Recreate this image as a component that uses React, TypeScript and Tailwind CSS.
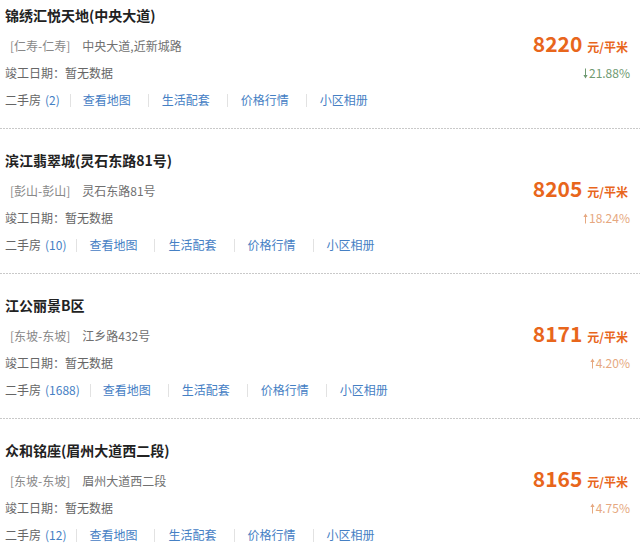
import React from "react";

type Item = {
  name: string;
  district: string;
  address: string;
  count: number;
  price: number;
  pct: string;
  up: boolean;
};

const items: Item[] = [
  { name: "锦绣汇悦天地(中央大道)", district: "仁寿-仁寿", address: "中央大道,近新城路", count: 2, price: 8220, pct: "21.88%", up: false },
  { name: "滨江翡翠城(灵石东路81号)", district: "彭山-彭山", address: "灵石东路81号", count: 10, price: 8205, pct: "18.24%", up: true },
  { name: "江公丽景B区", district: "东坡-东坡", address: "江乡路432号", count: 1688, price: 8171, pct: "4.20%", up: true },
  { name: "众和铭座(眉州大道西二段)", district: "东坡-东坡", address: "眉州大道西二段", count: 12, price: 8165, pct: "4.75%", up: true },
];

const links = ["查看地图", "生活配套", "价格行情", "小区相册"];

function Arrow({ up, color }: { up: boolean; color: string }) {
  return (
    <svg width="5" height="11" viewBox="0 0 5 11" className="mr-[1px] inline-block" style={{ transform: up ? "none" : "rotate(180deg)" }}>
      <path d="M2.5 0.5 L4.6 4 L3 4 L3 10.5 L2 10.5 L2 4 L0.4 4 Z" fill={color} />
    </svg>
  );
}

function Sep() {
  return <span className="inline-block h-[13px] w-px bg-[#e2e2e2]" />;
}

function Row({ item }: { item: Item }) {
  const pctColor = item.up ? "#e6a880" : "#6f9a72";
  return (
    <div className="pt-[21px]">
      <div className="h-[20px] pl-[5px] text-[14px] leading-[20px] font-bold text-[#222]">{item.name}</div>
      <div className="mt-[11px] flex h-[20px] items-center justify-between">
        <div className="pl-[10px] text-[12px] leading-[20px] text-[#707070]">
          <span className="text-[#888]">[</span>
          <span className="text-[#888]">{item.district}</span>
          <span className="text-[#888]">]</span>
          <span className="ml-[12px]">{item.address}</span>
        </div>
        <div className="flex items-baseline pr-[12px] font-bold text-[#e8661c]">
          <span className="text-[21px] leading-[14px]">{item.price}</span>
          <span className="ml-[5px] text-[12px] leading-[20px]">元/平米</span>
        </div>
      </div>
      <div className="mt-[7px] flex h-[20px] items-center justify-between">
        <div className="pl-[5px] text-[12px] leading-[20px] text-[#666]">竣工日期：暂无数据</div>
        <div className="flex items-center pr-[10px] text-[12px] leading-[20px]" style={{ color: pctColor }}>
          <Arrow up={item.up} color={pctColor} />
          <span>{item.pct}</span>
        </div>
      </div>
      <div className="mt-[7px] flex h-[20px] items-center pl-[5px] text-[12px] leading-[20px]">
        <span className="text-[#666]">二手房 </span>
        <span className="ml-[4px] text-[#4580c4]">({item.count})</span>
        <span className="ml-[10px] flex items-center"><Sep /></span>
        {links.map((l, i) => (
          <React.Fragment key={l}>
            {i > 0 && <span className="ml-[17px] flex items-center"><Sep /></span>}
            <span className={i === 0 ? "ml-[12px] text-[#4580c4]" : "ml-[13px] text-[#4580c4]"}>{l}</span>
          </React.Fragment>
        ))}
      </div>
      <div className="mt-[18px] h-px bg-[repeating-linear-gradient(to_right,#c9c9c9_0px,#c9c9c9_2px,transparent_2px,transparent_3px)]" />
    </div>
  );
}

export default function App() {
  return (
    <div className="h-[543px] w-[640px] overflow-hidden bg-white" style={{ fontFamily: '"Noto Sans CJK SC", "Noto Sans", sans-serif' }}>
      <div className="-mt-[16px]">
        {items.map((it) => (
          <Row key={it.name} item={it} />
        ))}
      </div>
    </div>
  );
}
